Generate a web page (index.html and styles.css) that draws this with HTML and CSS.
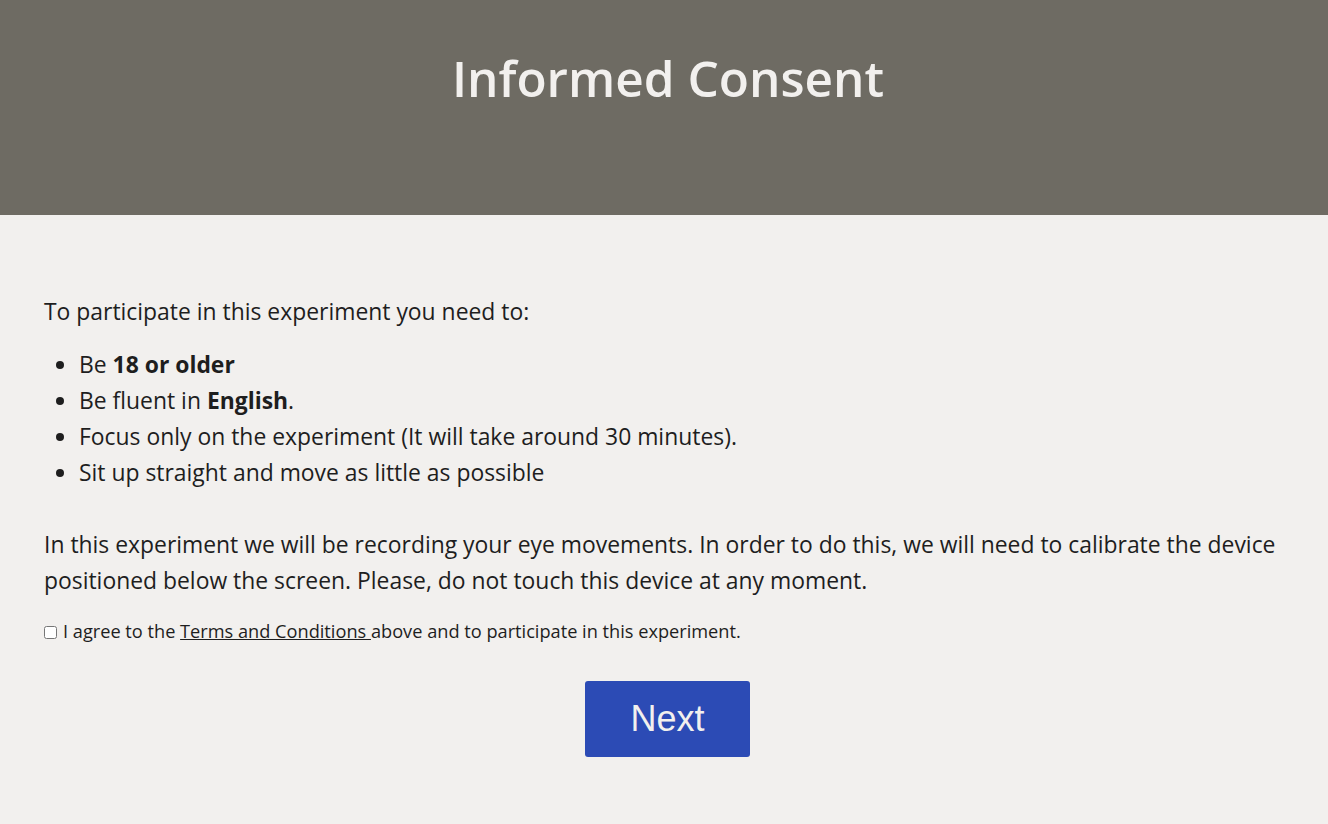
FILE: index.html
```html
<!DOCTYPE html>
<html lang="en">
<head>
<meta charset="utf-8">
<title>Informed Consent</title>
<link rel="stylesheet" href="styles.css">
</head>
<body>
<header class="banner">
  <h1 class="banner-title">Informed Consent</h1>
</header>
<main class="content">
  <p class="lead">To participate in this experiment you need to:</p>
  <ul class="reqs">
    <li>Be <b>18 or older</b></li>
    <li>Be fluent in <b>English</b>.</li>
    <li>Focus only on the experiment (It will take around 30 minutes).</li>
    <li>Sit up straight and move as little as possible</li>
  </ul>
  <p class="info">In this experiment we will be recording your eye movements. In order to do this, we will need to calibrate the device positioned below the screen. Please, do not touch this device at any moment.</p>
  <label class="agree"><input type="checkbox" class="agree-box">I agree to the <a href="#" class="terms">Terms and Conditions </a>above and to participate in this experiment.</label>
  <div class="actions">
    <button class="next" type="button">Next</button>
  </div>
</main>
</body>
</html>
```
FILE: styles.css
```css
html, body {
  margin: 0;
  padding: 0;
}
body {
  background: #f2f0ee;
  color: #1e1e1e;
  font-family: "Open Sans", "Noto Sans", sans-serif;
}
.banner {
  background: #6e6b63;
  height: 215px;
  display: flex;
  justify-content: center;
  box-sizing: border-box;
  padding-top: 44px;
  padding-left: 8px;
}
.banner-title {
  margin: 0;
  color: #f2f0ee;
  font-size: 49.5px;
  font-weight: 600;
  line-height: 68px;
}
.content {
  padding: 79px 37px 0 44px;
  font-size: 22.9px;
  line-height: 36px;
}
.lead {
  margin: 0 0 17px;
}
.reqs {
  margin: 0 0 36px;
  padding-left: 35px;
}
.info {
  margin: 0;
}
.agree {
  display: block;
  margin-top: 20px;
  font-size: 18.2px;
  line-height: 24px;
}
.agree-box {
  margin: 0 6px 0 0;
  width: 13px;
  height: 13px;
  vertical-align: -1px;
}
.terms {
  color: #1e1e1e;
  text-decoration: underline;
}
.actions {
  display: flex;
  justify-content: center;
  margin-top: 38px;
}
.next {
  background: #2c4bb5;
  color: #f2f0ee;
  border: none;
  border-radius: 3px;
  width: 165px;
  height: 76px;
  font-family: "Liberation Sans", Arial, sans-serif;
  font-size: 36px;
  padding: 0;
}
```
